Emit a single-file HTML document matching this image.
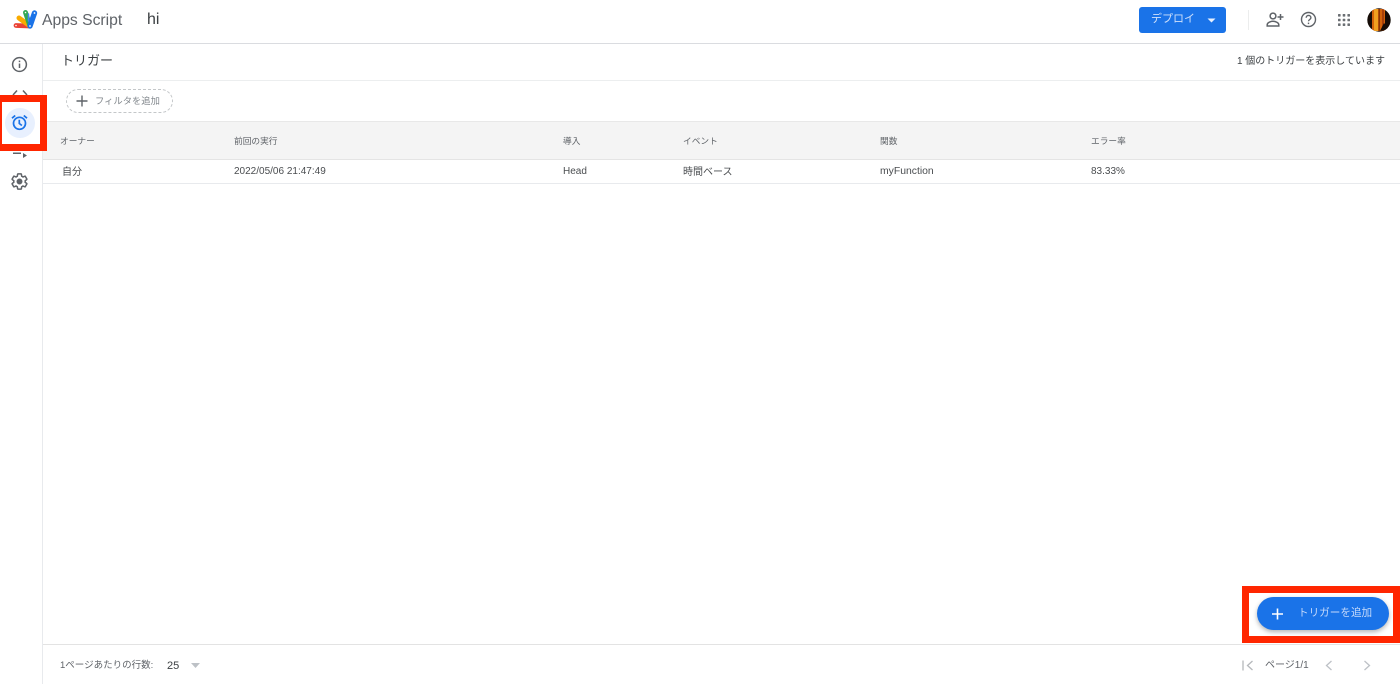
<!DOCTYPE html>
<html lang="ja"><head><meta charset="utf-8"><title>Apps Script</title>
<style>
html,body{margin:0;padding:0;width:1400px;height:684px;overflow:hidden;background:#fff}
body{font-family:"Liberation Sans","Noto Sans CJK JP",sans-serif;color:#3c4043;position:relative}
.a{position:absolute;white-space:nowrap}
.h{font-size:8.700px;line-height:12px;color:#5f6368}
.c{font-size:10px;line-height:12px;color:#4a4d50}
svg{position:absolute;display:block}
</style></head><body>
<!-- lines -->
<div class="a" style="left:0;top:43px;width:1400px;height:1px;background:#dadce0"></div>
<div class="a" style="left:42px;top:44px;width:1px;height:640px;background:#e8eaed"></div>
<div class="a" style="left:43px;top:80px;width:1357px;height:1px;background:#eceeef"></div>
<div class="a" style="left:43px;top:121px;width:1357px;height:39px;background:#f4f4f4;border-top:1px solid #e8e8e8;border-bottom:1px solid #e4e4e4;box-sizing:border-box"></div>
<div class="a" style="left:43px;top:183px;width:1357px;height:1px;background:#e8eaed"></div>
<div class="a" style="left:43px;top:644px;width:1357px;height:1px;background:#e3e3e3"></div>

<!-- logo -->
<svg style="left:13px;top:9px" width="26" height="21" viewBox="0 0 26 21" fill="none" stroke-linecap="round">
<path d="M3 16.500L17 17" stroke="#ea4335" stroke-width="4.800"/>
<path d="M6 9L17 17" stroke="#f9ab00" stroke-width="5"/>
<path d="M12.500 3.500L17 17" stroke="#34a853" stroke-width="5"/>
<path d="M21.500 4L17 17" stroke="#1a73e8" stroke-width="5.400"/>
<path d="M15.500 5L15.500 12" stroke="#4285f4" stroke-width="1.500"/>
<circle cx="3" cy="16.500" r=".8" fill="#fff"/><circle cx="17" cy="17" r=".9" fill="#fff"/><circle cx="21.500" cy="4" r=".9" fill="#fff"/><circle cx="12.500" cy="3.500" r=".8" fill="#fff"/>
</svg>
<div class="a" style="left:42px;top:11px;font-size:15.700px;line-height:20px;color:#5f6368">Apps Script</div>
<div class="a" style="left:147px;top:10px;font-size:16px;line-height:20px;color:#3c4043">hi</div>

<!-- top right -->
<div class="a" style="left:1139px;top:7px;width:87px;height:26px;background:#1a73e8;border-radius:3px"></div>
<div class="a" style="left:1151px;top:12px;font-size:11px;line-height:15px;color:#cfe0fa">デプロイ</div>
<svg style="left:1207px;top:18px" width="9" height="5" viewBox="0 0 9 5"><path d="M.5 .5h8L4.500 4.500z" fill="#e8f0fe"/></svg>
<div class="a" style="left:1248px;top:10px;width:1px;height:20px;background:#eceded"></div>
<svg style="left:1266px;top:11px" width="18" height="17" viewBox="0 0 18 17" fill="none" stroke="#5f6368" stroke-width="1.500"><circle cx="7" cy="5" r="2.900"/><path d="M1.200 15v-1.300c0-2 3.300-3.400 5.800-3.400s5.800 1.400 5.800 3.400V15z"/><path d="M14.500 3v6M11.500 6h6"/></svg>
<svg style="left:1300px;top:11px" width="17" height="17" viewBox="0 0 17 17" fill="none" stroke="#5f6368" stroke-width="1.400"><circle cx="8.500" cy="8.500" r="7"/><path d="M6.200 6.700c0-3 4.700-3 4.700 0 0 1.800-2.400 1.800-2.400 3.600"/><path d="M8.500 11.600v1.500"/></svg>
<svg style="left:1338px;top:14px" width="12" height="12" viewBox="0 0 12 12" fill="#6b6f73"><rect x="0" y="0" width="2.600" height="2.600" rx=".6"/><rect x="4.700" y="0" width="2.600" height="2.600" rx=".6"/><rect x="9.400" y="0" width="2.600" height="2.600" rx=".6"/><rect x="0" y="4.700" width="2.600" height="2.600" rx=".6"/><rect x="4.700" y="4.700" width="2.600" height="2.600" rx=".6"/><rect x="9.400" y="4.700" width="2.600" height="2.600" rx=".6"/><rect x="0" y="9.400" width="2.600" height="2.600" rx=".6"/><rect x="4.700" y="9.400" width="2.600" height="2.600" rx=".6"/><rect x="9.400" y="9.400" width="2.600" height="2.600" rx=".6"/></svg>
<svg style="left:1367px;top:8px" width="24" height="24" viewBox="0 0 24 24"><defs><clipPath id="av"><circle cx="12" cy="12" r="11.700"/></clipPath></defs><g clip-path="url(#av)"><rect width="24" height="24" fill="#140b06"/><rect x="5" y="1" width="13" height="22" fill="#d2620b"/><rect x="7" y="1" width="4" height="22" fill="#f0a020"/><rect x="11.500" y="1" width="1.500" height="22" fill="#8a3506"/><rect x="15" y="1" width="2" height="22" fill="#a8410a"/><path d="M13 23l4-8 6 7z" fill="#140b06"/></g></svg>

<!-- sidebar -->
<svg style="left:11px;top:56px" width="17" height="17" viewBox="0 0 17 17" fill="none" stroke="#5f6368" stroke-width="1.500"><circle cx="8.500" cy="8.500" r="6.900"/><path d="M8.500 7.500v4.500M8.500 4.600v1.500"/></svg>
<svg style="left:12px;top:90px" width="16" height="6" viewBox="0 0 16 6" fill="none" stroke="#5f6368" stroke-width="1.500"><path d="M5 0.500L1 5M11 .5L15 5"/></svg>
<svg style="left:13px;top:151px" width="16" height="9" viewBox="0 0 16 9"><rect x="0" y="1.500" width="8" height="1.500" fill="#5f6368"/><path d="M10 2l4 2.500-4 2.500z" fill="#5f6368"/></svg>
<svg style="left:10px;top:172px" width="19" height="19" viewBox="0 0 24 24" fill="none" stroke="#5f6368" stroke-width="1.900"><path d="M19.140 12.940c.04-.3.060-.61.060-.94 0-.32-.02-.64-.07-.94l2.030-1.580c.18-.14.230-.41.120-.61l-1.920-3.320c-.12-.22-.37-.29-.59-.22l-2.390.960c-.5-.38-1.030-.7-1.620-.94l-.36-2.540c-.04-.24-.24-.41-.48-.41h-3.840c-.24 0-.43.17-.47.41l-.36 2.540c-.59.240-1.130.57-1.620.94l-2.390-.96c-.22-.08-.47 0-.59.22L2.740 8.870c-.12.21-.08.47.12.61l2.030 1.580c-.05.3-.09.63-.09.94s.02.64.07.94l-2.030 1.580c-.18.14-.23.41-.12.61l1.920 3.320c.12.22.37.29.59.22l2.390-.96c.5.38 1.030.7 1.620.94l.36 2.540c.05.24.24.41.48.41h3.840c.24 0 .44-.17.47-.41l.36-2.540c.59-.24 1.130-.56 1.620-.94l2.390.96c.22.08.47 0 .59-.22l1.920-3.320c.12-.22.070-.47-.12-.61l-2.010-1.580z"/><circle cx="12" cy="12" r="2.800" fill="#5f6368"/></svg>

<div class="a" style="left:5px;top:108px;width:30px;height:30px;border-radius:50%;background:#e8f0fe"></div>
<svg style="left:11px;top:114px" width="17" height="17" viewBox="0 0 17 17" fill="none" stroke="#1a73e8" stroke-width="1.700"><circle cx="8.500" cy="9.300" r="6"/><path d="M8.300 5.800v3.700l2.600 2M1 4.200L4.200 1.500M16 4.200L12.800 1.500"/></svg>

<!-- toolbar -->
<div class="a" style="left:61px;top:51px;font-size:13px;line-height:20px;color:#3c4043">トリガー</div>
<div class="a" style="right:15px;top:55px;font-size:10px;line-height:14px;color:#3c4043">1 個のトリガーを表示しています</div>

<div class="a" style="left:66px;top:89px;width:107px;height:24px;box-sizing:border-box;border:1px dashed #c4c7c9;border-radius:12px"></div>
<svg style="left:76px;top:95px" width="12" height="12" viewBox="0 0 12 12"><path d="M6 .5v11M.5 6h11" stroke="#5f6368" stroke-width="1.400"/></svg>
<div class="a" style="left:95px;top:95px;font-size:9.300px;line-height:13px;color:#80868b">フィルタを追加</div>

<!-- table -->
<div class="a h" style="left:60px;top:135px">オーナー</div>
<div class="a h" style="left:234px;top:135px">前回の実行</div>
<div class="a h" style="left:563px;top:135px">導入</div>
<div class="a h" style="left:683px;top:135px">イベント</div>
<div class="a h" style="left:880px;top:135px">関数</div>
<div class="a h" style="left:1091px;top:135px">エラー率</div>
<div class="a c" style="left:62px;top:167px">自分</div>
<div class="a c" style="left:234px;top:166px">2022/05/06 21:47:49</div>
<div class="a c" style="left:563px;top:166px">Head</div>
<div class="a c" style="left:683px;top:167px">時間ベース</div>
<div class="a c" style="left:880px;top:166px;font-size:10.400px">myFunction</div>
<div class="a c" style="left:1091px;top:166px">83.33%</div>

<!-- FAB -->
<div class="a" style="left:1257px;top:597px;width:132px;height:33px;border-radius:17px;background:#1a73e8;box-shadow:0 2px 5px rgba(60,64,67,.4)"></div>
<svg style="left:1272px;top:608px" width="11" height="12" viewBox="0 0 11 12"><path d="M5.500 .5v11M0 6h11" stroke="#fff" stroke-width="1.600"/></svg>
<div class="a" style="left:1298px;top:606px;font-size:10.600px;line-height:14px;color:#c6dafb">トリガーを追加</div>

<!-- footer -->
<div class="a" style="left:60px;top:659px;font-size:9.500px;line-height:13px;color:#5f6368">1ページあたりの行数:</div>
<div class="a" style="left:167px;top:659px;font-size:11px;line-height:14px;color:#3c4043">25</div>
<svg style="left:191px;top:663px" width="9" height="5" viewBox="0 0 9 5"><path d="M0 0h9L4.500 5z" fill="#bdc1c6"/></svg>
<svg style="left:1242px;top:660px" width="12" height="11" viewBox="0 0 12 11" fill="none" stroke="#b5b8bb" stroke-width="1.300"><path d="M1 .5v10M10.500 1L5.500 5.500l5 4.500"/></svg>
<div class="a" style="left:1265px;top:659px;font-size:10px;line-height:13px;color:#5f6368">ページ1/1</div>
<svg style="left:1325px;top:660px" width="8" height="11" viewBox="0 0 8 11" fill="none" stroke="#bdc1c6" stroke-width="1.300"><path d="M6.500 1L1.500 5.500l5 4.500"/></svg>
<svg style="left:1363px;top:660px" width="8" height="11" viewBox="0 0 8 11" fill="none" stroke="#bdc1c6" stroke-width="1.300"><path d="M1.500 1l5 4.500-5 4.500"/></svg>

<!-- red annotations -->
<div class="a" style="left:0;top:95px;width:47px;height:56px;box-sizing:border-box;border:solid #ff2600;border-width:7px 7px 7px 2px"></div>
<div class="a" style="left:1242px;top:586px;width:158px;height:57px;box-sizing:border-box;border:solid #ff2600;border-width:7px 7px 7px 7px"></div>
</body></html>
